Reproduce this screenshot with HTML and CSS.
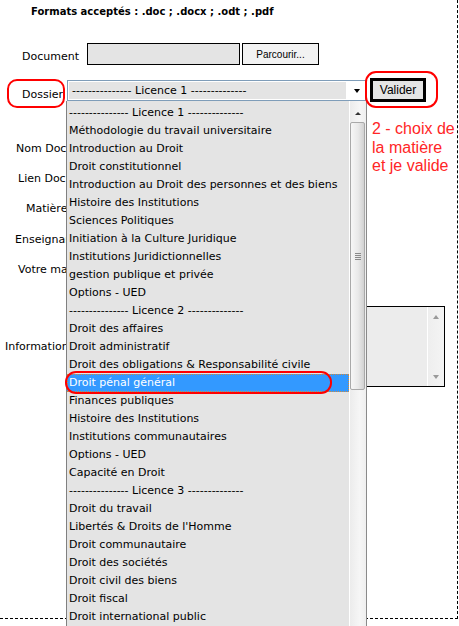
FILE: index.html
```
<!DOCTYPE html>
<html lang="fr">
<head>
<meta charset="utf-8">
<title>Dépôt de document</title>
<link rel="stylesheet" href="styles.css">
</head>
<body>
<div class="page">
  <div class="frame">
    <p class="formats">Formats acceptés : .doc ; .docx ; .odt ; .pdf</p>

    <div class="row row-doc">
      <span class="lbl lbl-doc">Document</span>
      <span class="file-field"></span>
      <span class="btn btn-browse">Parcourir...</span>
    </div>

    <div class="row row-dossier">
      <span class="lbl lbl-dossier">Dossier</span>
      <div class="select">
        <span class="sel-value">--------------- Licence 1 --------------</span>
        <span class="sel-arrow"><span class="tri-down"></span></span>
      </div>
      <span class="btn btn-valider">Valider</span>
    </div>

    <div class="lower">
      <span class="lbl lbl-nom">Nom Document</span>
      <span class="lbl lbl-lien">Lien Document</span>
      <span class="lbl lbl-matiere">Matière</span>
      <span class="lbl lbl-ens">Enseignant</span>
      <span class="lbl lbl-votre">Votre mail</span>
      <span class="lbl lbl-info">Informations</span>
      <p class="note">2 - choix de<br>la matière<br>et je valide</p>
      <div class="textarea">
        <div class="ta-body"></div>
        <div class="ta-scroll">
          <span class="tri-up-gray"></span>
          <span class="tri-down-gray"></span>
        </div>
      </div>
    </div>
  </div>

  <div class="dropdown">
    <div class="dd-items">
      <div class="dd-item">--------------- Licence 1 --------------</div>
      <div class="dd-item">Méthodologie du travail universitaire</div>
      <div class="dd-item">Introduction au Droit</div>
      <div class="dd-item">Droit constitutionnel</div>
      <div class="dd-item">Introduction au Droit des personnes et des biens</div>
      <div class="dd-item">Histoire des Institutions</div>
      <div class="dd-item">Sciences Politiques</div>
      <div class="dd-item">Initiation à la Culture Juridique</div>
      <div class="dd-item">Institutions Juridictionnelles</div>
      <div class="dd-item">gestion publique et privée</div>
      <div class="dd-item">Options - UED</div>
      <div class="dd-item">--------------- Licence 2 --------------</div>
      <div class="dd-item">Droit des affaires</div>
      <div class="dd-item">Droit administratif</div>
      <div class="dd-item">Droit des obligations &amp; Responsabilité civile</div>
      <div class="dd-item dd-selected">Droit pénal général</div>
      <div class="dd-item">Finances publiques</div>
      <div class="dd-item">Histoire des Institutions</div>
      <div class="dd-item">Institutions communautaires</div>
      <div class="dd-item">Options - UED</div>
      <div class="dd-item">Capacité en Droit</div>
      <div class="dd-item">--------------- Licence 3 --------------</div>
      <div class="dd-item">Droit du travail</div>
      <div class="dd-item">Libertés &amp; Droits de l'Homme</div>
      <div class="dd-item">Droit communautaire</div>
      <div class="dd-item">Droit des sociétés</div>
      <div class="dd-item">Droit civil des biens</div>
      <div class="dd-item">Droit fiscal</div>
      <div class="dd-item">Droit international public</div>
    </div>
    <div class="dd-scroll">
      <div class="sb-btn"><span class="tri-up"></span></div>
      <div class="sb-thumb">
        <span class="grip"></span>
        <span class="grip"></span>
        <span class="grip"></span>
        <span class="grip"></span>
      </div>
    </div>
  </div>

  <div class="annot annot-dossier"></div>
  <div class="annot annot-valider"></div>
  <div class="annot annot-item"></div>
</div>
</body>
</html>
```

FILE: styles.css
```
html, body {
  margin: 0;
  padding: 0;
  background: #fff;
  overflow: hidden;
}

body {
  font-family: "DejaVu Sans", Verdana, sans-serif;
  font-size: 11px;
  color: #000;
}

.page {
  position: relative;
  display: flow-root;
  width: 459px;
  height: 626px;
  overflow: hidden;
}

/* dashed form frame: left and top edges lie outside the view */
.frame {
  box-sizing: border-box;
  width: 478px;
  height: 639px;
  margin: -20px 0 0 -20px;
  padding: 19px 0 0 19px;
  border: 1px dashed #000;
}

.formats {
  margin: 5px 0 0 31px;
  font-weight: bold;
  font-size: 10px;
  line-height: 14px;
  white-space: nowrap;
}

.row {
  display: flex;
  align-items: flex-end;
}

.lbl {
  line-height: 14px;
  white-space: nowrap;
}

.row-doc {
  margin-top: 24px;
  height: 22px;
}

.lbl-doc {
  margin: 0 0 1px 22px;
  width: 65px;
  flex: none;
}

.file-field {
  box-sizing: border-box;
  width: 153px;
  height: 22px;
  border: 1px solid #000;
  background: #e4e4e4;
}

.btn {
  box-sizing: border-box;
  display: flex;
  align-items: center;
  justify-content: center;
  font-family: "Liberation Sans", Arial, sans-serif;
  color: #000;
}

.btn-browse {
  margin-left: 2px;
  width: 77px;
  height: 22px;
  border: 1px solid #000;
  background: #f2f2f2;
  font-size: 10px;
}

.row-dossier {
  margin-top: 13px;
  height: 24px;
}

.lbl-dossier {
  margin-left: 22px;
  width: 45px;
  flex: none;
}

.select {
  box-sizing: border-box;
  width: 299px;
  height: 21px;
  margin-bottom: 1px;
  border: 1px solid #7f9db9;
  background: #fff;
  padding: 1px;
  display: flex;
}

.sel-value {
  box-sizing: border-box;
  width: 277px;
  background: #e4e4e4;
  line-height: 17px;
  padding-left: 3px;
  white-space: nowrap;
  overflow: hidden;
}

.sel-arrow {
  flex: 1;
  display: flex;
  align-items: center;
  padding-left: 8px;
}

.tri-down {
  width: 0;
  height: 0;
  border-left: 3.5px solid transparent;
  border-right: 3.5px solid transparent;
  border-top: 4px solid #000;
}

.btn-valider {
  margin-left: 4px;
  width: 56px;
  height: 24px;
  border: 3px solid #000;
  background: #e4e4e4;
  font-size: 12px;
}

/* remaining form rows (their labels are partly hidden by the open list) */
.lower {
  margin-top: 18px;
  display: grid;
  grid-template-columns: 365px 1fr;
  grid-template-rows: 14px 30px 30px 31px 30px 30px 21px 81px;
}

.lower .lbl {
  grid-column: 1;
  justify-self: start;
  box-sizing: border-box;
  width: 66px;
  overflow: hidden;
  line-height: 30px;
}

.lbl-nom { grid-row: 2; padding-left: 16px; }
.lbl-lien { grid-row: 3; padding-left: 18px; }
.lbl-matiere { grid-row: 4; padding-left: 26px; }
.lbl-ens { grid-row: 5; padding-left: 15px; }
.lbl-votre { grid-row: 6; padding-left: 18px; }

.lower .lbl-info {
  grid-row: 8;
  align-self: center;
  line-height: 14px;
  padding-left: 5px;
}

.note {
  grid-column: 2;
  grid-row: 1 / span 4;
  margin: 0;
  padding-left: 7px;
  font-family: "Liberation Sans", Arial, sans-serif;
  font-size: 16px;
  line-height: 18.5px;
  color: #ff2626;
  white-space: nowrap;
}

.textarea {
  grid-column: 2;
  grid-row: 8;
  box-sizing: border-box;
  width: 80px;
  height: 81px;
  border: 1px solid #000;
  background: #ececec;
  display: flex;
}

.ta-body {
  flex: 1;
}

.ta-scroll {
  width: 16px;
  border-left: 1px solid #fff;
  background: linear-gradient(to right, #eeeeee, #f4f4f4);
  display: flex;
  flex-direction: column;
  justify-content: space-between;
  align-items: center;
  padding: 8px 0 7px;
}

.tri-up-gray {
  width: 0;
  height: 0;
  border-left: 3.5px solid transparent;
  border-right: 3.5px solid transparent;
  border-bottom: 4px solid #9a9a9a;
}

.tri-down-gray {
  width: 0;
  height: 0;
  border-left: 3.5px solid transparent;
  border-right: 3.5px solid transparent;
  border-top: 4px solid #9a9a9a;
}

/* open drop-down list over the form */
.dropdown {
  position: absolute;
  left: 66px;
  top: 101px;
  box-sizing: border-box;
  width: 301px;
  height: 525px;
  border-left: 1px solid #808080;
  border-right: 1px solid #8a8a8a;
  background: #e4e4e4;
  display: flex;
}

.dd-items {
  width: 282px;
  padding-top: 3px;
}

.dd-item {
  height: 18px;
  line-height: 18px;
  padding-left: 2px;
  white-space: nowrap;
  overflow: hidden;
}

.dd-selected {
  box-sizing: border-box;
  background: #3399ff;
  color: #fff;
  border: 1px dotted #d08a3c;
  line-height: 16px;
  padding-left: 1px;
}

.dd-scroll {
  width: 17px;
  border-left: 1px solid #fff;
  box-sizing: border-box;
  background: linear-gradient(to right, #ececec, #f6f6f6 60%, #efefef);
  padding-top: 3px;
}

.sb-btn {
  height: 18px;
  display: flex;
  align-items: center;
  justify-content: center;
}

.tri-up {
  width: 0;
  height: 0;
  border-left: 3px solid transparent;
  border-right: 3px solid transparent;
  border-bottom: 3px solid #333;
}

.sb-thumb {
  box-sizing: border-box;
  height: 268px;
  width: 15px;
  border: 1px solid #a9a9a9;
  border-radius: 2px;
  background: linear-gradient(to right, #f7f7f7, #e9e9e9 55%, #d2d2d2);
  display: flex;
  flex-direction: column;
  align-items: center;
  justify-content: center;
  gap: 1px;
}

.grip {
  width: 6px;
  height: 1px;
  background: #8a8a8a;
}

/* red hand-drawn annotations */
.annot {
  position: absolute;
  box-sizing: border-box;
  border: 2px solid #f00;
  border-radius: 10px;
}

.annot-dossier {
  left: 7px;
  top: 79px;
  width: 58px;
  height: 29px;
}

.annot-valider {
  left: 365px;
  top: 71px;
  width: 73px;
  height: 37px;
  border-radius: 11px;
}

.annot-item {
  left: 65px;
  top: 371px;
  width: 267px;
  height: 23px;
  border-radius: 11px;
}
```
